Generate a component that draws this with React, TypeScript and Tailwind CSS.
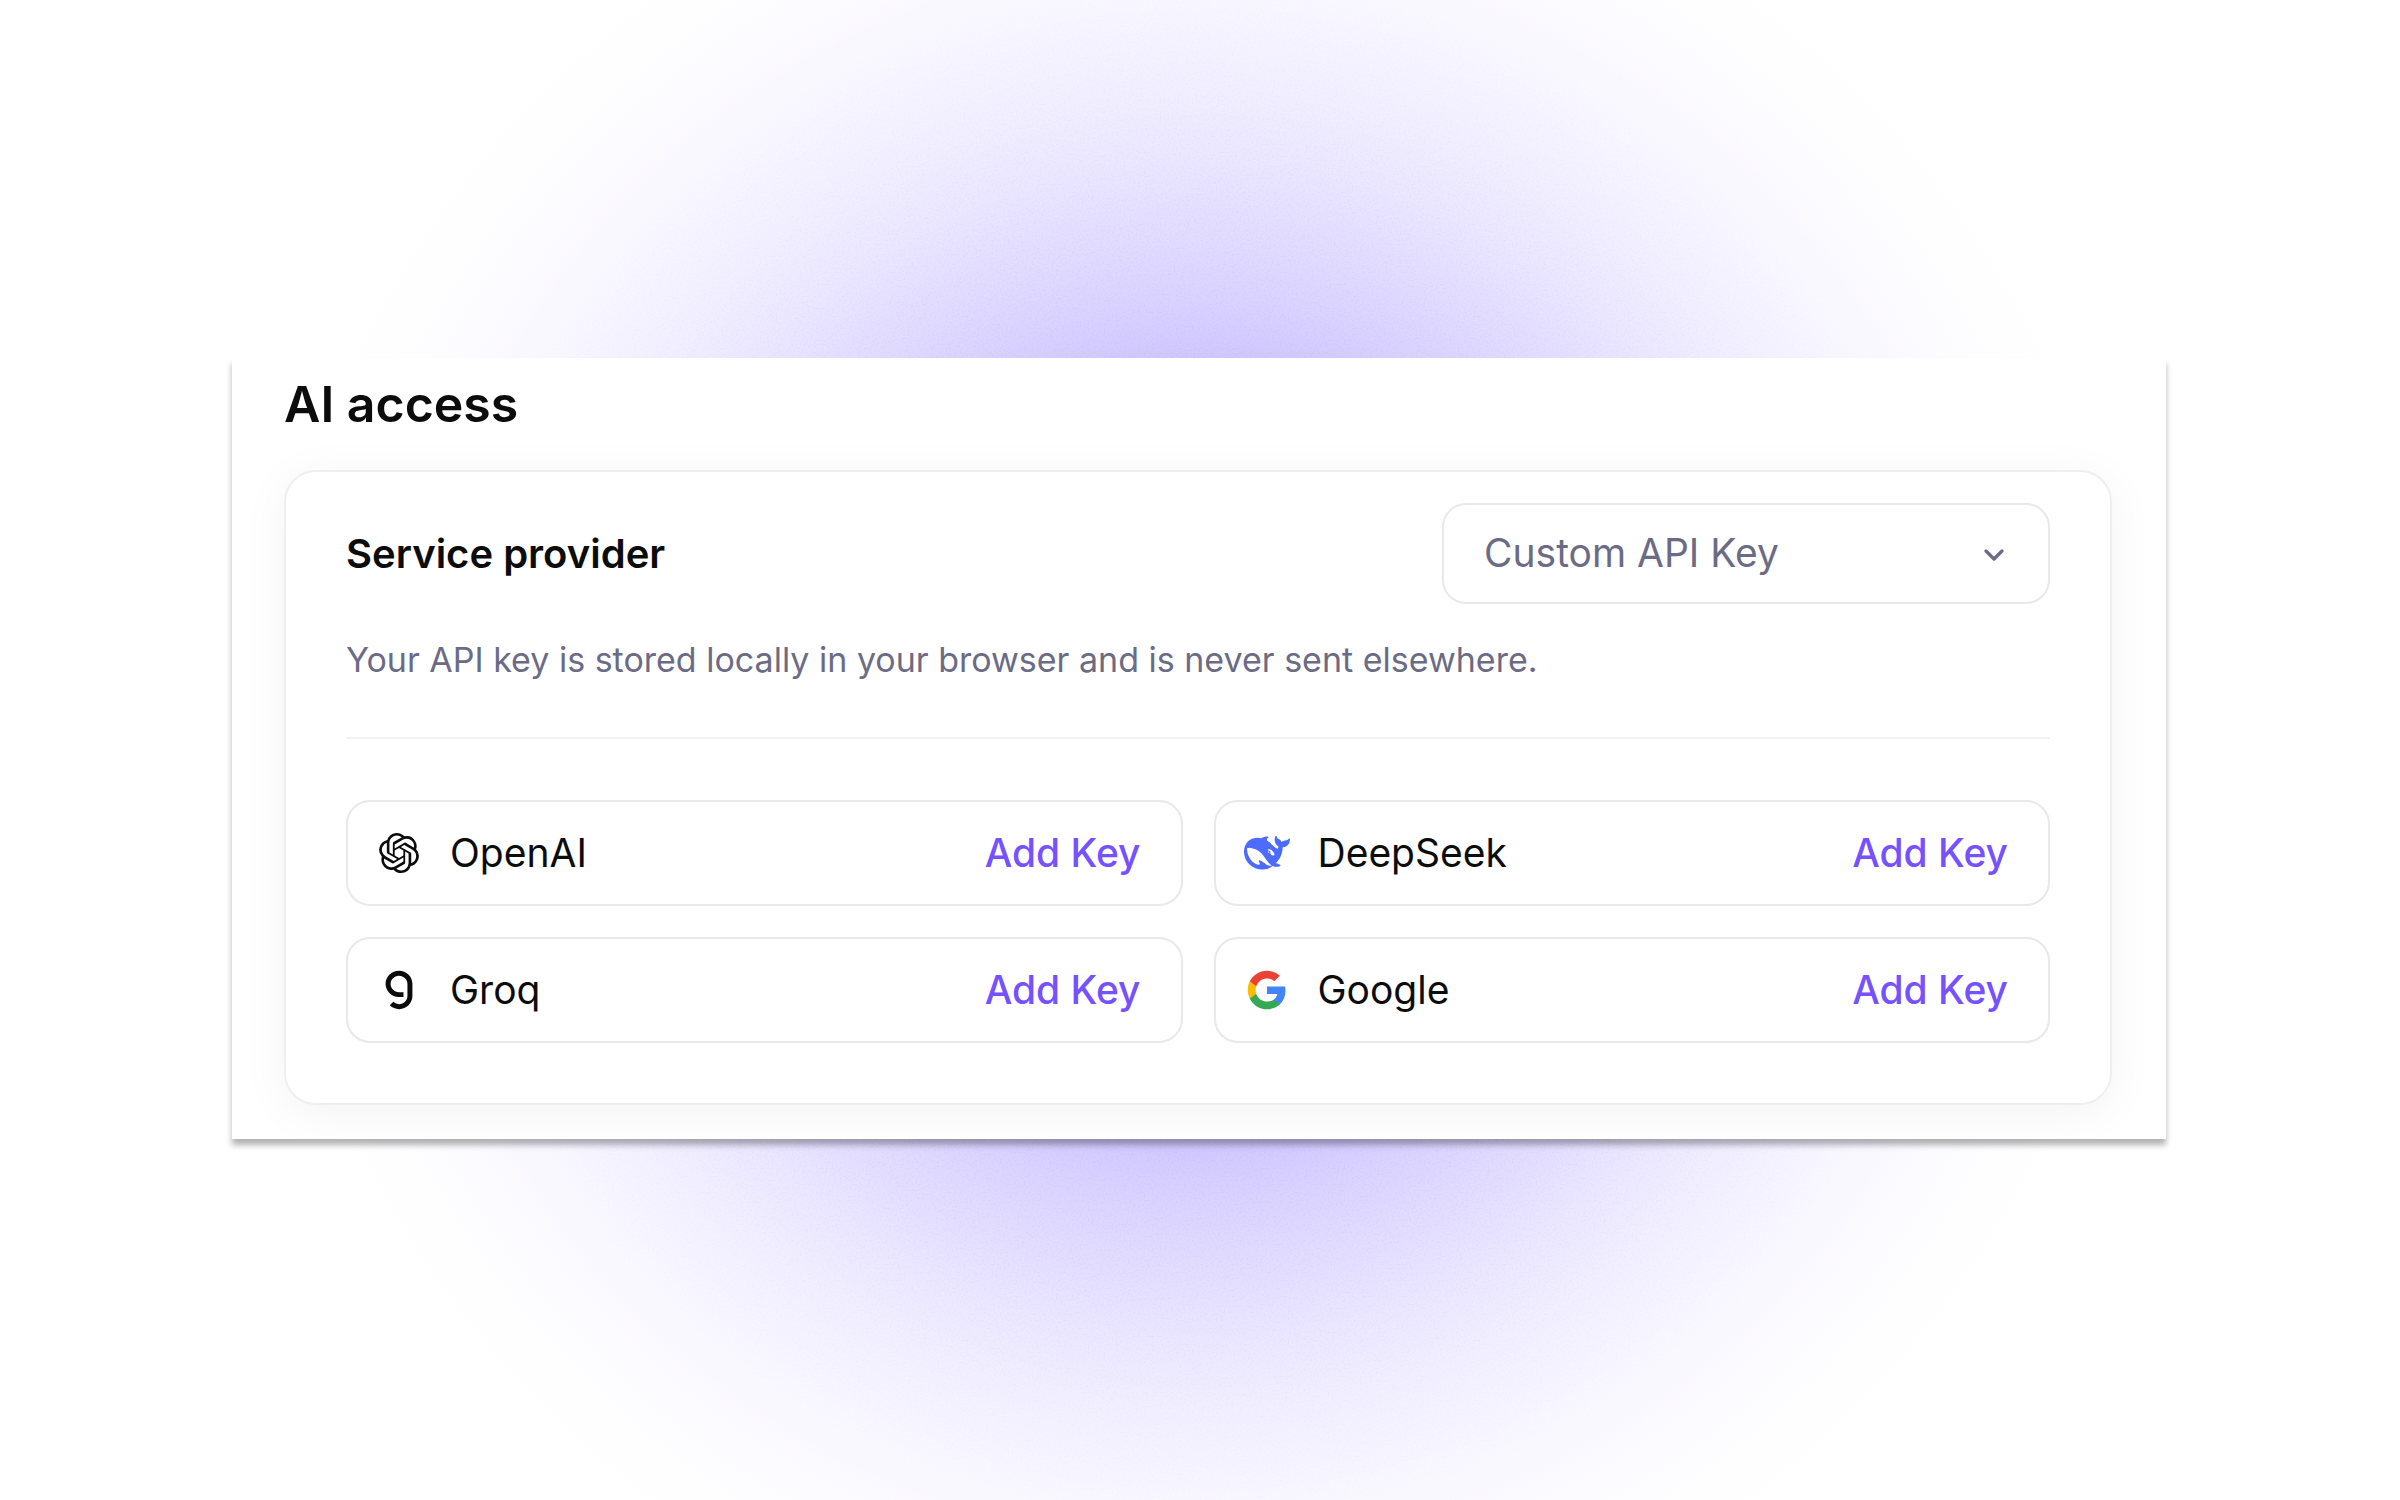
import { useId, type ReactNode } from "react";
import { ChevronDown } from "lucide-react";
import { SiOpenai } from "react-icons/si";

const DeepSeekIcon = () => (
  <svg viewBox="0 0 24 24" className="size-[46px] shrink-0 text-[#4d6bfe]" fill="currentColor" aria-hidden="true">
    <path d="M23.748 4.482c-.254-.124-.364.113-.512.234-.051.039-.094.09-.137.136-.372.397-.806.657-1.373.626-.829-.046-1.537.214-2.163.848-.133-.782-.575-1.248-1.247-1.548-.352-.156-.708-.311-.955-.65-.172-.241-.219-.51-.305-.774-.055-.16-.11-.323-.293-.35-.2-.031-.278.136-.356.276-.313.572-.434 1.202-.422 1.84.027 1.436.633 2.58 1.838 3.393.137.093.172.187.129.323-.082.28-.18.552-.266.833-.055.179-.137.217-.329.14a5.526 5.526 0 01-1.736-1.18c-.857-.828-1.631-1.742-2.597-2.458a11.365 11.365 0 00-.689-.471c-.985-.957.13-1.743.388-1.836.27-.098.093-.432-.779-.428-.872.004-1.67.295-2.687.684a3.055 3.055 0 01-.465.137 9.597 9.597 0 00-2.883-.102c-1.885.21-3.39 1.102-4.497 2.623C.082 8.606-.231 10.684.152 12.85c.403 2.284 1.569 4.175 3.36 5.653 1.858 1.533 3.997 2.284 6.438 2.14 1.482-.085 3.133-.284 4.994-1.86.47.234.962.327 1.78.397.63.059 1.236-.03 1.705-.128.735-.156.684-.837.419-.961-2.155-1.004-1.682-.595-2.113-.926 1.096-1.296 2.746-2.642 3.392-7.003.05-.347.007-.565 0-.845-.004-.17.035-.237.23-.256a4.173 4.173 0 001.545-.475c1.396-.763 1.96-2.015 2.093-3.517.02-.23-.004-.467-.247-.588zM11.581 18c-2.089-1.642-3.102-2.183-3.52-2.16-.392.024-.321.471-.235.763.09.288.207.486.371.739.114.167.192.416-.113.603-.673.416-1.842-.14-1.897-.167-1.361-.802-2.5-1.86-3.301-3.307-.774-1.393-1.224-2.887-1.298-4.482-.02-.386.093-.522.477-.592a4.696 4.696 0 011.529-.039c2.132.312 3.946 1.265 5.468 2.774.868.86 1.525 1.887 2.202 2.891.72 1.066 1.494 2.082 2.48 2.914.348.292.625.514.891.677-.802.09-2.14.11-3.054-.614zm1-6.44a.306.306 0 01.415-.287.302.302 0 01.2.288.306.306 0 01-.31.307.303.303 0 01-.304-.308zm3.11 1.596c-.2.081-.399.151-.59.16a1.245 1.245 0 01-.798-.254c-.274-.23-.47-.358-.552-.758a1.73 1.73 0 01.016-.588c.07-.327-.008-.537-.239-.727-.187-.156-.426-.199-.688-.199a.559.559 0 01-.254-.078c-.11-.054-.2-.19-.114-.358.028-.054.16-.186.192-.21.356-.202.767-.136 1.146.016.352.144.618.408 1.001.782.391.451.462.576.685.914.176.265.336.537.445.848.067.195-.019.354-.25.452z" />
  </svg>
);

const GroqIcon = () => (
  <svg viewBox="0 0 24 24" className="size-[46px] shrink-0" fill="currentColor" aria-hidden="true">
    <path d="M12.036 2c-3.853-.035-7 3-7.036 6.781-.035 3.782 3.055 6.872 6.908 6.907h2.42v-2.566h-2.292c-2.407.028-4.38-1.866-4.408-4.23-.029-2.362 1.901-4.298 4.308-4.326h.1c2.407 0 4.358 1.915 4.365 4.278v6.305c0 2.342-1.944 4.25-4.323 4.279a4.375 4.375 0 01-3.033-1.252l-1.851 1.818A7 7 0 0012.029 22h.092c3.803-.056 6.858-3.083 6.879-6.816v-6.5C18.907 4.963 15.817 2 12.036 2z" />
  </svg>
);

const GoogleIcon = () => (
  <svg viewBox="0 0 24 24" className="size-[42px] shrink-0" aria-hidden="true">
    <path
      fill="#4285F4"
      d="M22.56 12.25c0-.78-.07-1.53-.2-2.25H12v4.26h5.92c-.26 1.37-1.04 2.53-2.21 3.31v2.77h3.57c2.08-1.92 3.28-4.74 3.28-8.09z"
    />
    <path
      fill="#34A853"
      d="M12 23c2.97 0 5.46-.98 7.28-2.66l-3.57-2.77c-.98.66-2.23 1.06-3.71 1.06-2.86 0-5.29-1.93-6.16-4.53H2.18v2.84C3.99 20.53 7.7 23 12 23z"
    />
    <path
      fill="#FBBC05"
      d="M5.84 14.09c-.22-.66-.35-1.36-.35-2.09s.13-1.43.35-2.09V7.07H2.18C1.43 8.55 1 10.22 1 12s.43 3.45 1.18 4.93l3.66-2.84z"
    />
    <path
      fill="#EA4335"
      d="M12 5.38c1.62 0 3.06.56 4.21 1.64l3.15-3.15C17.45 2.09 14.97 1 12 1 7.7 1 3.99 3.47 2.18 7.07l3.66 2.84c.87-2.6 3.3-4.53 6.16-4.53z"
    />
  </svg>
);

// fine speckle over the purple glow, fading out with it
const Grain = () => (
  <svg
    className="pointer-events-none absolute inset-0 size-full mask-[radial-gradient(circle_at_center,#000_400px,transparent_820px)]"
    aria-hidden="true"
  >
    <filter id="grain">
      <feTurbulence type="fractalNoise" baseFrequency="0.5" numOctaves="2" />
      <feColorMatrix values="0 0 0 0 0.5  0 0 0 0 0.42  0 0 0 0 0.9  0.6 0 0 0 -0.27" />
    </filter>
    <rect width="100%" height="100%" filter="url(#grain)" />
  </svg>
);

interface Provider {
  name: string;
  icon: ReactNode;
}

const PROVIDERS: Provider[] = [
  {
    name: "OpenAI",
    icon: <SiOpenai className="size-10 shrink-0" aria-hidden="true" />,
  },
  { name: "DeepSeek", icon: <DeepSeekIcon /> },
  { name: "Groq", icon: <GroqIcon /> },
  { name: "Google", icon: <GoogleIcon /> },
];

const ProviderCard = ({ name, icon }: Provider) => {
  const nameId = useId();

  return (
    <li className="flex h-[106px] items-center rounded-3xl border-2 border-[#e8e8ed] bg-white pr-10 pl-7">
      <span className="mr-7 flex w-[46px] items-center justify-center">
        {icon}
      </span>
      <span id={nameId} className="flex-1 text-[39px]">
        {name}
      </span>
      <button
        type="button"
        aria-describedby={nameId}
        className="cursor-pointer text-[39px] font-medium text-[#7652ff]"
      >
        Add Key
      </button>
    </li>
  );
};

export default function App() {
  const selectId = useId();

  return (
    <main className="relative flex min-h-screen items-center bg-white bg-[radial-gradient(circle_at_center,#c2b4ff_0px,#d2c9ff_400px,#dad3ff_450px,#e2dcff_510px,#ebe7ff_590px,#f2f0ff_670px,#f8f6ff_750px,#fcfbff_830px,#ffffff_940px)] pr-[234px] pb-[3px] pl-[232px] font-['Inter',sans-serif] text-[#0c0c0d]">
      <Grain />
      <section className="relative w-full overflow-hidden bg-white pt-[18px] pr-[54px] pb-[34px] pl-[52px] shadow-[0_6px_6px_rgba(0,0,0,0.3)]">
        <h1 className="text-[50px] leading-[56px] font-semibold">AI access</h1>

        <div className="mt-[38px] rounded-[32px] border-2 border-[#efeff1] bg-white px-15 pt-[31px] pb-15 shadow-[0_8px_48px_rgba(0,0,0,0.05)]">
          <div className="flex items-center justify-between">
            <label htmlFor={selectId} className="text-[40px] font-semibold">
              Service provider
            </label>
            <div className="relative w-[608px]">
              <select
                id={selectId}
                className="h-[101px] w-full appearance-none rounded-3xl border-2 border-[#e8e8ed] bg-white px-10 text-[39px] text-[#6b6b86]"
              >
                <option>Custom API Key</option>
              </select>
              <ChevronDown
                className="pointer-events-none absolute top-9 right-10 size-8 text-[#6b6b86]"
                strokeWidth={2.5}
              />
            </div>
          </div>
          <p className="mt-7 text-[34px] leading-[56px] text-[#6b6b86]">
            Your API key is stored locally in your browser and is never sent
            elsewhere.
          </p>

          <hr className="mt-[49px] border-t-2 border-[#f2f2f5]" />

          <ul className="mt-[61px] grid grid-cols-2 gap-[31px]">
            {PROVIDERS.map((provider) => (
              <ProviderCard key={provider.name} {...provider} />
            ))}
          </ul>
        </div>
      </section>
    </main>
  );
}
